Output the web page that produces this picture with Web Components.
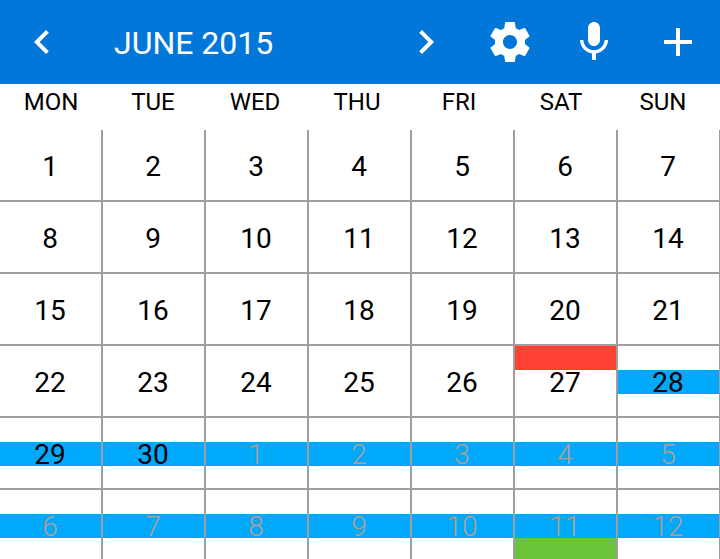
<!DOCTYPE html>
<html lang="en">
<head>
<meta charset="utf-8">
<title>Calendar</title>
<meta name="viewport" content="width=device-width, initial-scale=1">
<style>
  body {
    margin: 0;
    height: 100vh;
    overflow: hidden;
    background: #fff;
    color: #000;
    font-family: Roboto, "Liberation Sans", sans-serif;
    --bar: #0077d9;
    --line: #9e9e9e;
    --outside: #b39e94;
    --red: #ff4133;
    --blue: #00a9fa;
    --green: #6bc33a;
  }
</style>
</head>
<body>
<calendar-bar>
  <icon-button slot="start" icon="prev" label="Previous month"></icon-button>
  JUNE 2015
  <icon-button slot="end" icon="next" label="Next month"></icon-button>
  <icon-button slot="end" icon="settings" label="Settings"></icon-button>
  <icon-button slot="end" icon="mic" label="Voice input"></icon-button>
  <icon-button slot="end" icon="add" label="Add event"></icon-button>
</calendar-bar>
<month-grid></month-grid>

<script>
const ICONS = {
  prev: 'M15.41 7.41 14 6l-6 6 6 6 1.41-1.41L10.83 12z',
  next: 'M10 6 8.59 7.41 13.17 12l-4.58 4.59L10 18l6-6z',
  settings: 'M19.43 12.98c.04-.32.07-.64.07-.98s-.03-.66-.07-.98l2.11-1.65c.19-.15.24-.42.12-.64l-2-3.46c-.12-.22-.39-.3-.61-.22l-2.49 1c-.52-.4-1.08-.73-1.69-.98l-.38-2.65C14.46 2.18 14.25 2 14 2h-4c-.25 0-.46.18-.49.42l-.38 2.65c-.61.25-1.17.59-1.69.98l-2.49-1c-.23-.09-.49 0-.61.22l-2 3.46c-.13.22-.07.49.12.64l2.11 1.65c-.04.32-.07.65-.07.98s.03.66.07.98l-2.11 1.65c-.19.15-.24.42-.12.64l2 3.46c.12.22.39.3.61.22l2.49-1c.52.4 1.08.73 1.69.98l.38 2.65c.03.24.24.42.49.42h4c.25 0 .46-.18.49-.42l.38-2.65c.61-.25 1.17-.59 1.69-.98l2.49 1c.23.09.49 0 .61-.22l2-3.46c.12-.22.07-.49-.12-.64l-2.11-1.65zM12 15.5c-1.93 0-3.5-1.57-3.5-3.5s1.57-3.5 3.5-3.5 3.5 1.57 3.5 3.5-1.57 3.5-3.5 3.5z',
  mic: 'M12 14c1.66 0 3-1.34 3-3V5c0-1.66-1.34-3-3-3S9 3.34 9 5v6c0 1.66 1.34 3 3 3zm5.3-3c0 3-2.54 5.1-5.3 5.1S6.7 14 6.7 11H5c0 3.41 2.72 6.23 6 6.72V21h2v-3.28c3.28-.48 6-3.3 6-6.72h-1.7z',
  add: 'M19 13h-6v6h-2v-6H5v-2h6V5h2v6h6v2z'
};

customElements.define('icon-button', class extends HTMLElement {
  connectedCallback() {
    if (this.shadowRoot) return;
    this.attachShadow({ mode: 'open' }).innerHTML = `
      <style>
        :host { display: block; width: 84px; height: 84px; }
        button { display: grid; place-items: center; width: 100%; height: 100%; margin: 0; padding: 0; border: 0; background: none; color: inherit; cursor: pointer; }
        svg { display: block; width: 48px; height: 48px; fill: currentColor; }
      </style>
      <button type="button" aria-label="${this.getAttribute('label')}">
        <svg viewBox="0 0 24 24" aria-hidden="true"><path d="${ICONS[this.getAttribute('icon')]}"/></svg>
      </button>`;
  }
});

customElements.define('calendar-bar', class extends HTMLElement {
  connectedCallback() {
    if (this.shadowRoot) return;
    this.attachShadow({ mode: 'open' }).innerHTML = `
      <style>
        :host { display: block; background: var(--bar); color: #fff; }
        header { display: flex; align-items: center; height: 84px; }
        h1 { flex: 1; margin: 0; padding: 2px 0 0 30px; font-size: 32px; line-height: 40px; font-weight: 400; white-space: nowrap; }
        nav { display: flex; }
      </style>
      <header>
        <slot name="start"></slot>
        <h1><slot></slot></h1>
        <nav aria-label="Calendar actions"><slot name="end"></slot></nav>
      </header>`;
  }
});

/* A day is split into three time slots; each may hold a coloured event band. */
customElements.define('day-cell', class extends HTMLElement {
  connectedCallback() {
    if (this.shadowRoot) return;
    const slots = ['first', 'second', 'third'];
    const bands = slots.map((name, i) => this.hasAttribute(name)
      ? `<i style="grid-row:${i + 1};background:var(--${this.getAttribute(name)})"></i>` : '').join('');
    this.attachShadow({ mode: 'open' }).innerHTML = `
      <style>
        :host { display: grid; grid-template: 24px 24px 22px / 1fr; }
        i { grid-column: 1; }
        span { grid-area: 1 / 1 / -1 / -1; align-self: center; padding: 4px 1px 0 0; text-align: center; font-size: 28px; line-height: 32px; }
        :host([outside]) span { color: var(--outside); font-weight: 300; }
      </style>${bands}<span><slot></slot></span>`;
  }
});

customElements.define('month-grid', class extends HTMLElement {
  connectedCallback() {
    if (this.shadowRoot) return;
    const names = ['MON', 'TUE', 'WED', 'THU', 'FRI', 'SAT', 'SUN'];
    const day = n => {
      const outside = n > 30;
      let attrs = outside ? ' outside' : '';
      if (n === 27) attrs += ' first="red"';
      if (n >= 28) attrs += ' second="blue"';
      if (n === 41) attrs += ' third="green"';
      return `<td><day-cell${attrs}>${outside ? n - 30 : n}</day-cell></td>`;
    };
    let rows = '';
    for (let week = 0; week < 6; week++) {
      rows += '<tr>' + names.map((_, d) => day(week * 7 + d + 1)).join('') + '</tr>';
    }
    this.attachShadow({ mode: 'open' }).innerHTML = `
      <style>
        :host { display: block; overflow: hidden; }
        table, thead, tbody { display: block; }
        tr { display: grid; grid-template-columns: repeat(7, 1fr); }
        thead { padding: 4px 6px 14px 0; }
        th { padding: 0; font-size: 24px; line-height: 28px; font-weight: 400; text-align: center; }
        tbody { margin-right: -1px; }
        td { padding: 0; border: solid var(--line); border-width: 0 2px 2px 0; }
      </style>
      <table aria-label="June 2015">
        <thead><tr>${names.map(n => `<th scope="col">${n}</th>`).join('')}</tr></thead>
        <tbody>${rows}</tbody>
      </table>`;
  }
});
</script>
</body>
</html>
